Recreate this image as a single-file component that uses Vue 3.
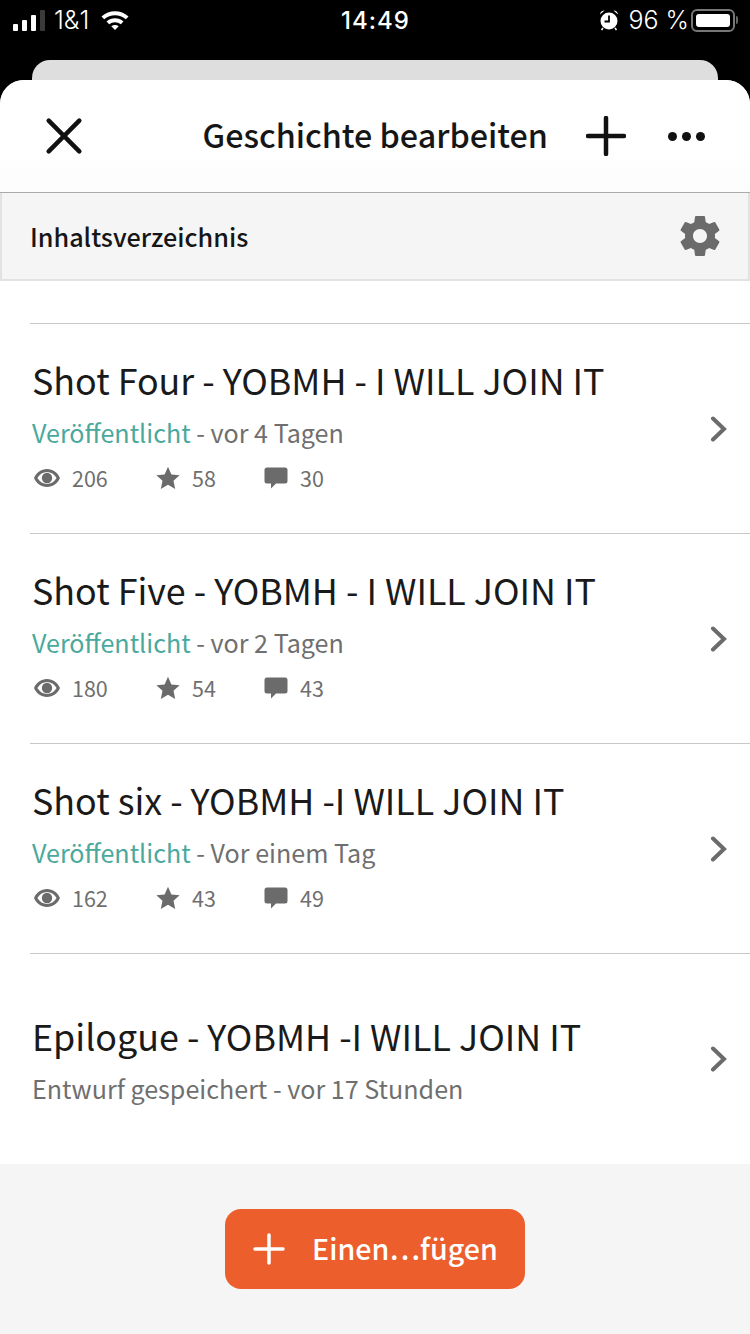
<script setup>
const parts = [
  { id: 4, title: 'Shot Four - YOBMH - I WILL JOIN IT', when: 'vor 4 Tagen', views: 206, stars: 58, comments: 30 },
  { id: 5, title: 'Shot Five - YOBMH - I WILL JOIN IT', when: 'vor 2 Tagen', views: 180, stars: 54, comments: 43 },
  { id: 6, title: 'Shot six - YOBMH -I WILL JOIN IT', when: 'Vor einem Tag', views: 162, stars: 43, comments: 49 },
  { id: 7, title: 'Epilogue - YOBMH -I WILL JOIN IT', draft: true, when: 'Entwurf gespeichert - vor 17 Stunden' }
];
</script>

<template>
  <div class="screen">
    <div class="status">
      <div class="status-left">
        <div class="signal"><i></i><i></i><i></i><i class="off"></i></div>
        <span>1&amp;1</span>
        <svg class="wifi" width="30" height="22" viewBox="0 0 30 22">
          <path d="M1.5 7.5C9 .6 21 .6 28.500 7.500L25.800 10.300C19.600 4.800 10.400 4.800 4.200 10.300Z" fill="#fff" />
          <path d="M6.500 12.500C11.400 8.200 18.600 8.200 23.500 12.500L20.800 15.300C17.400 12.400 12.600 12.400 9.200 15.300Z" fill="#fff" />
          <path d="M11.300 17.300C13.500 15.600 16.500 15.600 18.700 17.300L15 21Z" fill="#fff" />
        </svg>
      </div>
      <div class="status-time">14:49</div>
      <div class="status-right">
        <svg class="alarm" width="20" height="22" viewBox="0 0 20 22">
          <circle cx="10" cy="12" r="8.500" fill="#fff" />
          <path d="M10 6.500V12.500H5.500" fill="none" stroke="#000" stroke-width="1.800" />
          <path d="M1 5.500C1.300 3 3 1.500 5.500 1.500ZM19 5.500C18.700 3 17 1.500 14.500 1.500Z" fill="#fff" />
          <path d="M4 19L2.500 21M16 19L17.500 21" stroke="#fff" stroke-width="1.500" />
        </svg>
        <span>96 %</span>
        <div class="battery"><div class="battery-fill"></div></div>
        <div class="battery-cap"></div>
      </div>
    </div>

    <div class="back-card"></div>

    <div class="sheet">
      <header class="head">
        <svg class="close" width="40" height="40" viewBox="0 0 40 40">
          <path d="M3 3L37 37M37 3L3 37" stroke="#111" stroke-width="5" stroke-linecap="round" transform="translate(2 2) scale(.9)" />
        </svg>
        <h1>Geschichte bearbeiten</h1>
        <svg class="plus" width="40" height="40" viewBox="0 0 40 40">
          <path d="M20 2V38M2 20H38" stroke="#111" stroke-width="4.500" stroke-linecap="round" />
        </svg>
        <div class="dots"><i></i><i></i><i></i></div>
      </header>

      <div class="toc">
        <span>Inhaltsverzeichnis</span>
        <svg width="48" height="48" viewBox="0 0 24 24">
          <path fill="#6b6b6b" d="M19.430 12.980c.04-.32.070-.64.070-.98s-.03-.66-.07-.98l2.110-1.650c.19-.15.240-.42.120-.64l-2-3.460c-.12-.22-.39-.3-.61-.22l-2.490 1c-.52-.4-1.080-.73-1.690-.98l-.38-2.650A.488.488 0 0 0 14 2h-4c-.25 0-.46.18-.49.42l-.38 2.650c-.61.25-1.170.59-1.690.98l-2.490-1c-.23-.09-.49 0-.61.22l-2 3.460c-.13.22-.07.49.12.64l2.110 1.650c-.04.32-.07.65-.07.98s.03.66.07.98l-2.110 1.650c-.19.15-.24.42-.12.64l2 3.460c.12.22.39.3.61.22l2.490-1c.52.4 1.080.73 1.690.98l.38 2.650c.03.24.24.42.49.42h4c.25 0 .46-.18.49-.42l.38-2.650c.61-.25 1.170-.59 1.690-.98l2.490 1c.23.09.49 0 .61-.22l2-3.460c.12-.22.07-.49-.12-.64l-2.110-1.650zM12 15.500c-1.930 0-3.500-1.570-3.500-3.500s1.570-3.500 3.500-3.500 3.500 1.570 3.500 3.500-1.570 3.500-3.500 3.500z" />
        </svg>
      </div>

      <ul class="list">
        <li v-for="p in parts" :key="p.id" class="row" :class="{ 'row-draft': p.draft }">
          <div class="row-body">
            <div class="row-title">{{ p.title }}</div>
            <div class="row-meta">
              <template v-if="!p.draft"><span class="published">Veröffentlicht</span> - </template>{{ p.when }}
            </div>
            <div v-if="!p.draft" class="row-stats">
              <span class="stat stat-views">
                <svg width="28" height="20" viewBox="0 0 28 20">
                  <path fill-rule="evenodd" fill="#6b6b6b" d="M14 1C8 1 3.400 4.600 1 10c2.400 5.400 7 9 13 9s10.600-3.600 13-9C24.600 4.600 20 1 14 1ZM14 4c4 0 7.300 2.300 9.600 6-2.300 3.700-5.600 6-9.600 6s-7.300-2.300-9.600-6C6.700 6.300 10 4 14 4Z" />
                  <circle cx="14" cy="10" r="5.200" fill="#6b6b6b" />
                </svg>
                {{ p.views }}
              </span>
              <span class="stat stat-stars">
                <svg width="24" height="24" viewBox="0 0 24 24">
                  <path fill="#6b6b6b" d="M12 .8l3.400 7.600 8.200.9-6.100 5.500 1.700 8.100L12 18.800l-7.200 4.100 1.700-8.100L.4 9.300l8.200-.9z" />
                </svg>
                {{ p.stars }}
              </span>
              <span class="stat">
                <svg width="24" height="24" viewBox="0 0 24 24">
                  <path fill="#6b6b6b" d="M3 1.500h18A2.500 2.500 0 0 1 23.500 4v11a2.500 2.500 0 0 1-2.500 2.500h-9L7 22.500v-5H3A2.500 2.500 0 0 1 .5 15V4A2.500 2.500 0 0 1 3 1.500z" />
                </svg>
                {{ p.comments }}
              </span>
            </div>
          </div>
          <svg class="chevron" width="18" height="26" viewBox="0 0 18 26">
            <path d="M3 2.500L14 13L3 23.500" fill="none" stroke="#6b6b6b" stroke-width="4" stroke-linecap="round" />
          </svg>
        </li>
      </ul>

      <footer class="foot">
        <button class="add">
          <svg width="32" height="32" viewBox="0 0 32 32">
            <path d="M16 2V30M2 16H30" stroke="#fff" stroke-width="3.500" stroke-linecap="round" />
          </svg>
          <span>Einen…fügen</span>
        </button>
      </footer>
    </div>
  </div>
</template>

<style>
html, body { background: #000; }
</style>

<style scoped>
.screen {
  position: relative;
  width: 750px;
  height: 1334px;
  overflow: hidden;
  background: #000;
  font-family: "Noto Sans CJK SC", "Noto Sans", sans-serif;
}
.status {
  display: flex;
  align-items: center;
  justify-content: space-between;
  height: 40px;
  padding: 0 12px 0 13px;
  color: #fff;
  font-family: "Inter", "Liberation Sans", sans-serif;
  font-size: 25px;
}
.status-left { display: flex; align-items: center; width: 200px; }
.signal { display: flex; align-items: flex-end; gap: 4px; height: 22px; margin-right: 9px; }
.signal i { width: 5px; background: #fff; border-radius: 1px; }
.signal i:nth-child(1) { height: 7px; }
.signal i:nth-child(2) { height: 11px; }
.signal i:nth-child(3) { height: 16px; }
.signal i:nth-child(4) { height: 21px; }
.signal i.off { background: #3a3a3a; }
.status-left span { font-weight: 300; }
.wifi { margin-left: 11px; }
.status-time { font-size: 24px; font-weight: 500; letter-spacing: 1px; }
.status-right { display: flex; align-items: center; width: 200px; justify-content: flex-end; font-weight: 300; }
.alarm { margin-right: 9px; }
.battery {
  width: 44px;
  height: 23px;
  margin-left: 2px;
  padding: 3px;
  box-sizing: border-box;
  border: 2px solid #777;
  border-radius: 6px;
}
.battery-fill { height: 100%; background: #fff; border-radius: 3px; }
.battery-cap { width: 2px; height: 8px; margin-left: 1px; background: #666; border-radius: 0 2px 2px 0; }

.back-card {
  height: 20px;
  margin: 20px 32px 0;
  background: #dedede;
  border-radius: 18px 18px 0 0;
}
.sheet {
  display: flex;
  flex-direction: column;
  height: 1254px;
  overflow: hidden;
  background: #fff;
  border-radius: 24px 24px 0 0;
}
.head {
  display: flex;
  align-items: center;
  height: 113px;
  padding: 0 45px 0 44px;
  box-sizing: border-box;
  border-bottom: 1px solid #aaa;
  background: linear-gradient(#fff 60%, #fcfcfc);
}
.close { flex: none; }
.head h1 {
  flex: 1;
  margin: -4px 0 0;
  padding-right: 38px;
  color: #161616;
  font-size: 32.300px;
  font-weight: 500;
  line-height: 40px;
  text-align: right;
}
.plus { flex: none; }
.dots { display: flex; gap: 5px; margin-left: 42px; }
.dots i { width: 9px; height: 9px; background: #111; border-radius: 50%; }
.toc {
  display: flex;
  align-items: center;
  justify-content: space-between;
  height: 88px;
  padding: 0 28px;
  box-sizing: border-box;
  background: #f5f5f5;
  border: 2px solid #e2e2e2;
  border-top: 0;
  color: #161616;
  font-size: 25.200px;
  font-weight: 500;
}
.toc svg { margin-right: -4px; }
.list {
  flex: 1;
  margin: 42px 0 0 30px;
  padding: 0;
  list-style: none;
}
.row {
  display: flex;
  align-items: center;
  justify-content: space-between;
  height: 210px;
  padding: 0 22px 0 2px;
  box-sizing: border-box;
  border-top: 1px solid #c9c9c9;
}
.row-body { margin-top: -6px; }
.row-title { color: #1a1a1a; font-size: 35.850px; line-height: 48px; }
.row-meta { margin-top: 11px; color: #6f6f6f; font-size: 25.100px; line-height: 36px; }
.published { color: #4aa99c; }
.row-stats { display: flex; margin-top: 10px; color: #6f6f6f; font-size: 21.500px; line-height: 36px; }
.stat { display: flex; align-items: center; gap: 12px; }
.stat-views { width: 123px; margin-left: 1px; gap: 11px; }
.stat-stars { width: 108px; }
.row-draft .row-body { margin-top: 0; }
.foot {
  display: flex;
  justify-content: center;
  height: 170px;
  padding-top: 45px;
  box-sizing: border-box;
  background: #f5f5f5;
}
.add {
  display: flex;
  align-items: center;
  gap: 27px;
  width: 300px;
  height: 80px;
  padding: 0 0 0 28px;
  background: #ec5f2d;
  border: 0;
  border-radius: 16px;
  color: #fff;
  font-family: inherit;
  font-size: 28.600px;
  font-weight: 500;
}
.add span { margin-top: -4px; }
</style>
